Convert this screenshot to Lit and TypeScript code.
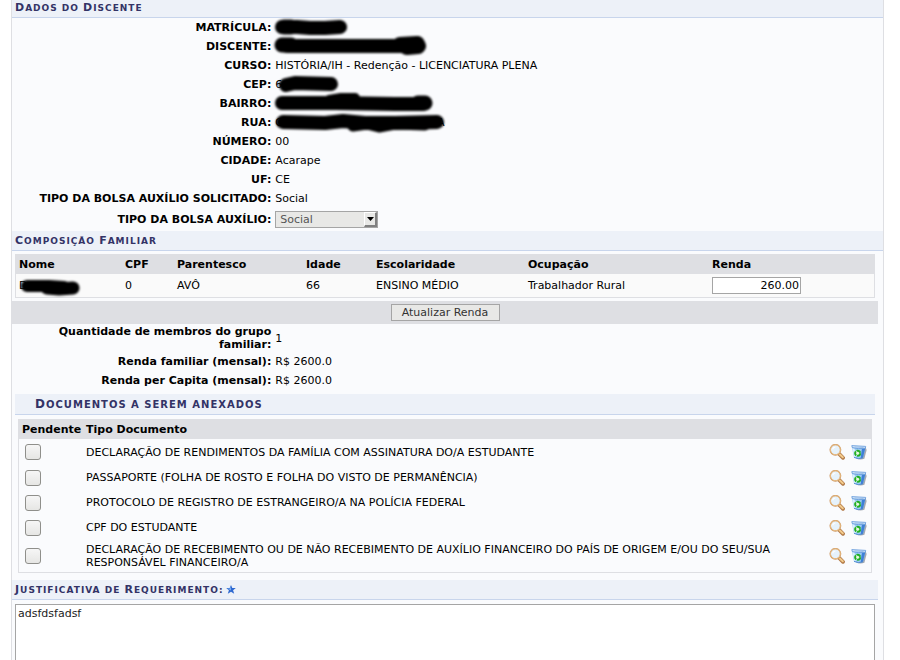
import { LitElement, html, css, svg, nothing } from "lit";
import { customElement, property } from "lit/decorators.js";

interface Stroke {
  d: string;
  w: number;
}

interface Field {
  label: string;
  value?: string;
  lead?: string;
  tail?: string;
  strokes?: Stroke[];
}

const student: Field[] = [
  { label: "MATRÍCULA:", strokes: [{ d: "M7-1L22-1L35 0L50 0L65-1", w: 14 }, { d: "M9-1L16-1", w: 15 }] },
  {
    label: "DISCENTE:",
    strokes: [
      { d: "M7-2L16-2", w: 15 },
      { d: "M12-1L130-1", w: 14 },
      { d: "M125-2L142-3L143-1L132 0", w: 16 },
    ],
  },
  { label: "CURSO:", value: "HISTÓRIA/IH - Redenção - LICENCIATURA PLENA" },
  { label: "CEP:", lead: "6", strokes: [{ d: "M11 0L20-2L56-1", w: 14 }] },
  {
    label: "BAIRRO:",
    strokes: [
      { d: "M7-1L60-1L120 0L148 0", w: 14 },
      { d: "M54-4L66-6L80-6", w: 10 },
      { d: "M143-1L150-1", w: 15 },
    ],
  },
  {
    label: "RUA:",
    lead: "C",
    tail: "A",
    strokes: [
      { d: "M8-1L50 0L68-2L90 0L120 0L162-1", w: 14 },
      { d: "M78 3L92 1L104 4L120 1L150 2", w: 11 },
    ],
  },
  { label: "NÚMERO:", value: "00" },
  { label: "CIDADE:", value: "Acarape" },
  { label: "UF:", value: "CE" },
  { label: "TIPO DA BOLSA AUXÍLIO SOLICITADO:", value: "Social" },
];

const totals: Field[] = [
  { label: "Quantidade de membros do grupo familiar:", value: "1" },
  { label: "Renda familiar (mensal):", value: "R$ 2600.0" },
  { label: "Renda per Capita (mensal):", value: "R$ 2600.0" },
];

const documents = [
  "DECLARAÇÃO DE RENDIMENTOS DA FAMÍLIA COM ASSINATURA DO/A ESTUDANTE",
  "PASSAPORTE (FOLHA DE ROSTO E FOLHA DO VISTO DE PERMANÊNCIA)",
  "PROTOCOLO DE REGISTRO DE ESTRANGEIRO/A NA POLÍCIA FEDERAL",
  "CPF DO ESTUDANTE",
  "DECLARAÇÃO DE RECEBIMENTO OU DE NÃO RECEBIMENTO DE AUXÍLIO FINANCEIRO DO PAÍS DE ORIGEM E/OU DO SEU/SUA RESPONSÁVEL FINANCEIRO/A",
];

const magnifier = html`<svg width="16" height="16" viewBox="0 0 16 16" aria-hidden="true">
  <path d="M10.4 10.2L14 13.8" stroke="#b27a48" stroke-width="3.8" stroke-linecap="round" />
  <path d="M10.6 10.2L13.8 13.2" stroke="#f3cb8c" stroke-width="2" stroke-linecap="round" />
  <circle cx="6.4" cy="5.8" r="5.2" fill="#e6f2fb" stroke="#c99662" stroke-width="1.4" />
  <circle cx="6.4" cy="5.8" r="5" fill="none" stroke="#f2c78c" stroke-width="0.8" />
  <path d="M3.6 5.2Q4.3 3.2 6.4 3" fill="none" stroke="#fff" stroke-width="1.2" />
</svg>`;

const bin = html`<svg width="16" height="16" viewBox="0 0 16 16" aria-hidden="true">
  <path d="M5 14.6Q9 16.2 13.4 14.8L15.6 6L14.6 3z" fill="#858d98" opacity="0.75" />
  <path d="M0.8 2.4L3 13.4Q7.5 15.6 12 13.8L14.6 3z" fill="#9ccbf5" />
  <path d="M11 4L9.6 14.5L12 13.8L14.6 3z" fill="#3f80d6" />
  <path d="M1.4 4L3.4 13L5 13.8L3.6 4.4z" fill="#e0f0fd" />
  <path d="M3 13.4Q7.5 15.6 12 13.8" fill="none" stroke="#4a86cf" stroke-width="0.9" />
  <path d="M0.8 1.6L14.7 2.4L14 4.4Q7 5.2 1.3 3.6z" fill="#dcebfa" stroke="#5a93d8" stroke-width="0.8" />
  <path d="M3.6 3L12.6 3.5" stroke="#86b2e4" stroke-width="0.8" />
  <circle cx="6.6" cy="9.2" r="2.5" fill="#e9f9e4" stroke="#22b022" stroke-width="2" stroke-dasharray="4.4 0.8" />
</svg>`;

const star = html`<svg class="star" width="10" height="9" viewBox="0 0 10 9" role="img" aria-label="Obrigatório">
  <path d="M5 0L6.3 3L9.8 3L7.1 5.2L8.2 8.8L5 6.8L1.8 8.8L2.9 5.2L0.2 3L3.7 3z" fill="#2d68d0" />
  <path d="M5 1L5 5.4L1 3.4L4 3.4z" fill="#79abf0" />
</svg>`;

const mark = (strokes?: Stroke[]) =>
  strokes
    ? html`<svg class="mark" width="1" height="1" aria-hidden="true">
        ${strokes.map((s) => svg`<path d=${s.d} stroke-width=${s.w} />`)}
      </svg>`
    : nothing;

/** Section caption set in capitals, with the written capitals one size up. */
@customElement("section-title")
export class SectionTitle extends LitElement {
  @property() text = "";
  @property({ type: Boolean, reflect: true }) large = false;

  static styles = css`
    :host { display: block; }
    h2 {
      margin: 0;
      font-size: 9px;
      line-height: 19px;
      height: 19px;
      font-weight: bold;
      letter-spacing: 1px;
      text-transform: uppercase;
      color: #333366;
      background: #edf1f8;
      border-bottom: 1px solid #c8d5ec;
      padding-left: 3px;
    }
    .cap { font-size: 11px; }
    :host([large]) h2 { font-size: 10px; line-height: 20px; height: 20px; padding-left: 20px; }
    :host([large]) .cap { font-size: 12px; }
  `;

  render() {
    const parts = this.text.split(/([A-Z])/).filter((p) => p);
    return html`<h2>${parts.map((p) => (/^[A-Z]$/.test(p) ? html`<span class="cap">${p}</span>` : p))}<slot></slot></h2>`;
  }
}

@customElement("app-root")
export class AppRoot extends LitElement {
  static styles = css`
    :host {
      display: block;
      max-height: 100vh;
      overflow: hidden;
      background: #fff;
      color: #000;
      font: 11px/13px "DejaVu Sans", Verdana, sans-serif;
    }
    * { box-sizing: border-box; }
    .panel {
      margin: 0 16px 0 11px;
      border: solid #dedfe3;
      border-width: 0 1px;
      background: #fafbfd;
    }
    .first { margin-top: -2px; }
    .fields { display: flex; flex-direction: column; }
    .field {
      display: grid;
      grid-template-columns: 30% 1fr;
      align-items: center;
      min-height: 19px;
    }
    .field.tall { min-height: 23px; }
    .field > .label { font-weight: bold; text-align: right; padding: 0 2px; }
    .field > .value { padding: 0 2px; }
    .totals .field:first-child { padding: 1px 0; }
    .totals { padding-bottom: 4px; }
    .redacted { display: flex; align-items: center; position: relative; min-height: 13px; }
    .redacted .tail { padding-left: 154px; }
    .mark {
      position: absolute;
      left: 0;
      top: 50%;
      overflow: visible;
      fill: none;
      stroke: #000;
      stroke-linecap: round;
      stroke-linejoin: round;
      filter: blur(1px);
    }
    .picker { position: relative; display: inline-block; vertical-align: middle; }
    select {
      appearance: none;
      display: block;
      width: 103px;
      height: 17px;
      margin: 0;
      padding: 0 16px 0 4px;
      border: 1px solid #a5a5a5;
      border-radius: 0;
      background: #e8e8e6;
      color: #555;
      opacity: 1;
      font: inherit;
    }
    .arrow {
      position: absolute;
      top: 1px;
      right: 1px;
      width: 13px;
      height: 15px;
      display: grid;
      place-items: center;
      pointer-events: none;
      background: #e8e8e6;
      border: 1px solid #fff;
      border-right: 2px solid #808080;
      border-bottom: 2px solid #808080;
    }
    table { border-collapse: collapse; table-layout: fixed; }
    th, td { text-align: left; padding: 0 3px; }
    .family { margin: 3px 8px 3px 3px; border: 1px solid #dedfe3; border-top: 0; background: #fafafa; }
    .family table, .docs table { width: 100%; }
    thead { background: #dedfe3; }
    thead tr { height: 20px; }
    .family tbody tr { height: 23px; }
    .c-name { width: 106px; }
    .c-cpf { width: 52px; }
    .c-kin { width: 129px; }
    .c-age { width: 70px; }
    .c-school { width: 152px; }
    .c-job { width: 184px; }
    .income {
      display: block;
      width: 89px;
      height: 17px;
      margin: 0;
      padding: 0 1px;
      border: 1px solid #a5a5a5;
      background: #fff;
      color: #000;
      font: inherit;
      text-align: right;
    }
    .band {
      display: flex;
      justify-content: center;
      align-items: center;
      height: 23px;
      margin-right: 5px;
      background: #dedfe3;
    }
    .update {
      width: 109px;
      height: 17px;
      padding: 0;
      border: 1px solid #a5a5a5;
      background: #e8e8e6;
      color: #333;
      font: inherit;
    }
    .attach { margin: 0 8px 7px 3px; }
    .docs { margin: 4px 3px 0; border: 1px solid #dedfe3; border-top: 0; }
    .docs tbody tr { height: 25px; }
    .docs tbody tr:first-child { height: 26px; }
    .docs tbody tr:last-child { height: 32px; }
    .c-pending { width: 64px; }
    .c-tools { width: 45px; }
    .docs td:first-child { padding-left: 6px; }
    .check {
      appearance: none;
      display: block;
      width: 16px;
      height: 16px;
      margin: 0;
      border: 1px solid #8f8f8b;
      border-radius: 3px;
      background: linear-gradient(#f6f6f6, #e6e6e4);
    }
    .tools { display: flex; gap: 6px; }
    .tool { display: block; width: 16px; height: 16px; padding: 0; border: 0; background: none; }
    .tool svg { display: block; }
    .reason { margin-right: 5px; }
    .star { margin-left: 3px; vertical-align: -1px; }
    .why { padding: 4px 8px 8px 3px; }
    textarea {
      display: block;
      width: 100%;
      height: 80px;
      margin: 0;
      padding: 2px;
      border: 1px solid #a5a5a5;
      background: #fff;
      color: #222;
      font: inherit;
      resize: none;
    }
  `;

  private field(f: Field) {
    return html`<div class="field">
      <span class="label">${f.label}</span>
      <span class="value">
        ${f.strokes
          ? html`<span class="redacted">${f.lead ?? nothing}${f.tail ? html`<span class="tail">${f.tail}</span>` : nothing}${mark(f.strokes)}</span>`
          : f.value}
      </span>
    </div>`;
  }

  render() {
    return html`<main class="panel">
      <section-title class="first" text="Dados do Discente"></section-title>
      <div class="fields">
        ${student.map((f) => this.field(f))}
        <div class="field tall">
          <label class="label" for="grant">TIPO DA BOLSA AUXÍLIO:</label>
          <span class="value">
            <span class="picker">
              <select id="grant" disabled><option>Social</option></select>
              <span class="arrow"><svg width="7" height="4" viewBox="0 0 7 4" aria-hidden="true"><path d="M0 0H7L3.5 4z" /></svg></span>
            </span>
          </span>
        </div>
      </div>

      <section-title text="Composição Familiar"></section-title>
      <div class="family">
        <table>
          <colgroup>
            <col class="c-name" /><col class="c-cpf" /><col class="c-kin" /><col class="c-age" />
            <col class="c-school" /><col class="c-job" /><col />
          </colgroup>
          <thead>
            <tr><th>Nome</th><th>CPF</th><th>Parentesco</th><th>Idade</th><th>Escolaridade</th><th>Ocupação</th><th>Renda</th></tr>
          </thead>
          <tbody>
            <tr>
              <td><span class="redacted">D${mark([{ d: "M8 0L30 0L45 1", w: 12 }, { d: "M28 2L40 3L54 2", w: 13 }])}</span></td>
              <td>0</td>
              <td>AVÔ</td>
              <td>66</td>
              <td>ENSINO MÉDIO</td>
              <td>Trabalhador Rural</td>
              <td><input class="income" type="text" aria-label="Renda" value="260.00" /></td>
            </tr>
          </tbody>
        </table>
      </div>
      <div class="band"><button class="update" type="button">Atualizar Renda</button></div>
      <div class="fields totals">${totals.map((f) => this.field(f))}</div>

      <div class="attach">
        <section-title large text="Documentos a serem anexados"></section-title>
        <div class="docs">
          <table>
            <colgroup><col class="c-pending" /><col /><col class="c-tools" /></colgroup>
            <thead>
              <tr><th>Pendente</th><th colspan="2">Tipo Documento</th></tr>
            </thead>
            <tbody>
              ${documents.map(
                (name, i) => html`<tr>
                  <td><input class="check" type="checkbox" id="doc-${i}" /></td>
                  <td><label for="doc-${i}">${name}</label></td>
                  <td>
                    <div class="tools">
                      <button class="tool" type="button" aria-label="Visualizar">${magnifier}</button>
                      <button class="tool" type="button" aria-label="Remover">${bin}</button>
                    </div>
                  </td>
                </tr>`
              )}
            </tbody>
          </table>
        </div>
      </div>

      <section-title class="reason" text="Justificativa de Requerimento:">${star}</section-title>
      <div class="why"><textarea aria-label="Justificativa de Requerimento" .value=${"adsfdsfadsf"}></textarea></div>
    </main>`;
  }
}
